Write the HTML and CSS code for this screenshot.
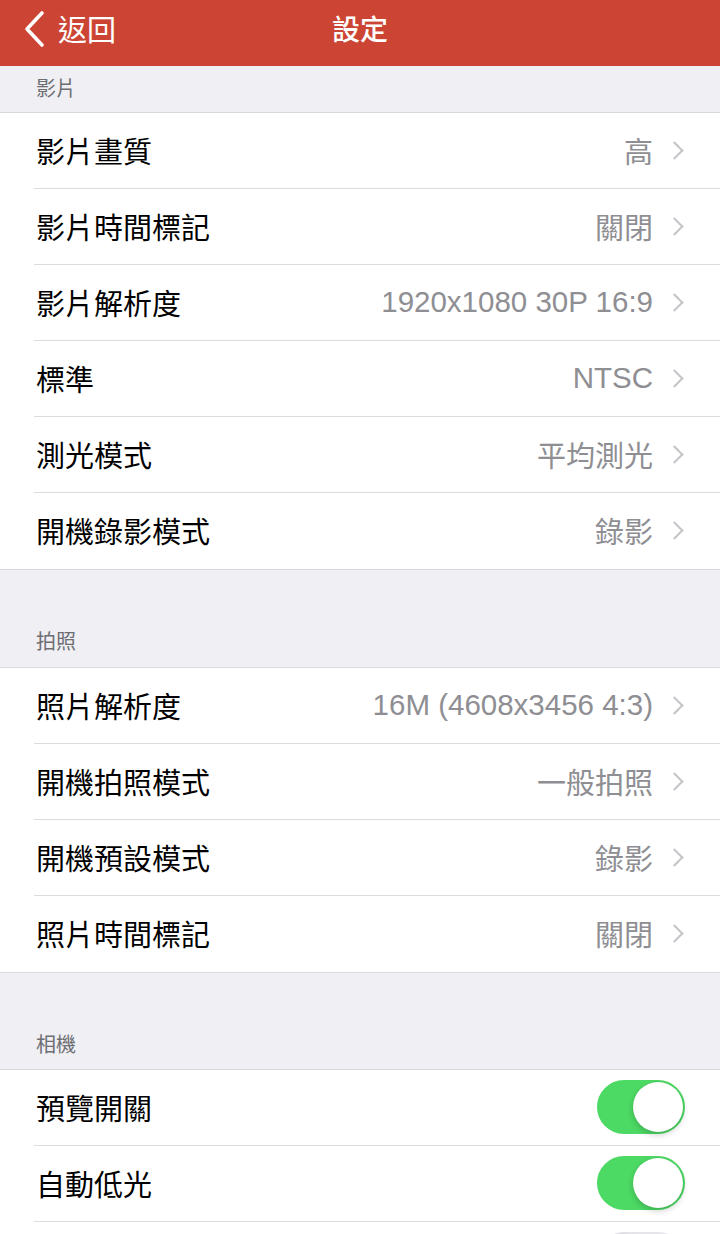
FILE: index.html
```html
<!DOCTYPE html>
<html lang="zh-Hant">
<head>
<meta charset="utf-8">
<title>設定</title>
<link rel="stylesheet" href="styles.css">
</head>
<body>
<header class="navbar">
  <a class="back">
    <svg class="back-icon" width="24" height="38" viewBox="0 0 24 38"><path d="M20 3 L5 19 L20 35" fill="none" stroke="#fff" stroke-width="3.6" stroke-linecap="round" stroke-linejoin="round"/></svg>
    <span>返回</span>
  </a>
  <h1 class="title">設定</h1>
</header>

<main class="content">
  <div class="section-header first">影片</div>
  <ul class="group">
    <li class="row"><span class="label">影片畫質</span><span class="value">高</span><span class="chev"></span></li>
    <li class="row"><span class="label">影片時間標記</span><span class="value">關閉</span><span class="chev"></span></li>
    <li class="row"><span class="label">影片解析度</span><span class="value latin">1920x1080 30P 16:9</span><span class="chev"></span></li>
    <li class="row"><span class="label">標準</span><span class="value latin">NTSC</span><span class="chev"></span></li>
    <li class="row"><span class="label">測光模式</span><span class="value">平均測光</span><span class="chev"></span></li>
    <li class="row"><span class="label">開機錄影模式</span><span class="value">錄影</span><span class="chev"></span></li>
  </ul>

  <div class="section-header">拍照</div>
  <ul class="group">
    <li class="row"><span class="label">照片解析度</span><span class="value latin">16M (4608x3456 4:3)</span><span class="chev"></span></li>
    <li class="row"><span class="label">開機拍照模式</span><span class="value">一般拍照</span><span class="chev"></span></li>
    <li class="row"><span class="label">開機預設模式</span><span class="value">錄影</span><span class="chev"></span></li>
    <li class="row"><span class="label">照片時間標記</span><span class="value">關閉</span><span class="chev"></span></li>
  </ul>

  <div class="section-header last">相機</div>
  <ul class="group">
    <li class="row"><span class="label">預覽開關</span><span class="toggle on"><span class="knob"></span></span></li>
    <li class="row"><span class="label">自動低光</span><span class="toggle on"><span class="knob"></span></span></li>
    <li class="row"><span class="label"></span><span class="toggle"><span class="knob"></span></span></li>
  </ul>
</main>
</body>
</html>
```

FILE: styles.css
```css
* { box-sizing: border-box; }
html, body { margin: 0; padding: 0; }
body {
  width: 720px;
  height: 1234px;
  overflow: hidden;
  background: #efeff4;
  font-family: "Noto Sans CJK TC", "Noto Sans", sans-serif;
  -webkit-font-smoothing: antialiased;
}

.navbar {
  height: 66px;
  background: #cc4534;
  display: flex;
  align-items: center;
  justify-content: center;
  position: relative;
  color: #fff;
}
.back {
  position: absolute;
  left: 22px;
  top: 0;
  height: 66px;
  display: flex;
  align-items: center;
  gap: 12px;
  font-size: 29px;
  color: #fff;
}
.back-icon { display: block; margin-top: -8px; }
.back span { margin-top: -10px; }
.title {
  margin: -10px 0 0;
  font-size: 28px;
  font-weight: 500;
}

.content { display: flex; flex-direction: column; }

.section-header {
  height: 97px;
  display: flex;
  align-items: flex-end;
  padding: 0 36px 12px;
  font-size: 20px;
  color: #6d6d72;
}
.section-header.first { height: 46px; padding-bottom: 10px; }
.section-header.last { height: 96px; padding-bottom: 11px; }

.group {
  list-style: none;
  margin: 0;
  padding: 0;
  background: #fff;
  border-top: 1px solid #d8d8dc;
  border-bottom: 1px solid #d8d8dc;
}
.row {
  height: 76px;
  display: flex;
  align-items: center;
  padding: 0 35px 0 36px;
  position: relative;
}
.row + .row::before {
  content: "";
  position: absolute;
  left: 34px;
  right: 0;
  top: -1px;
  height: 1px;
  background: #dcdce0;
}
.label {
  flex: 1;
  font-size: 29px;
  color: #000;
  margin-top: -2px;
}
.value {
  font-size: 29px;
  color: #8e8e93;
  margin-right: 20px;
  margin-top: -2px;
}
.value.latin {
  font-family: "Liberation Sans", "Noto Sans CJK TC", sans-serif;
  font-size: 29.5px;
}
.chev {
  width: 12px;
  height: 20px;
  position: relative;
}
.chev::after {
  content: "";
  position: absolute;
  left: -5px;
  top: 3px;
  width: 11px;
  height: 11px;
  border-top: 2.5px solid #c4c4c9;
  border-right: 2.5px solid #c4c4c9;
  transform: rotate(45deg);
}

.toggle {
  width: 88px;
  height: 54px;
  border-radius: 27px;
  background: #fff;
  border: 2px solid #e5e5ea;
  position: relative;
  margin-top: -3px;
}
.toggle.on { background: #4cd964; border-color: #4cd964; }
.knob {
  position: absolute;
  top: 0;
  left: 0;
  width: 50px;
  height: 50px;
  border-radius: 50%;
  background: #fff;
  box-shadow: 0 3px 6px rgba(0,0,0,0.18), 0 0 1px rgba(0,0,0,0.12);
}
.toggle.on .knob { left: 34px; }
```
